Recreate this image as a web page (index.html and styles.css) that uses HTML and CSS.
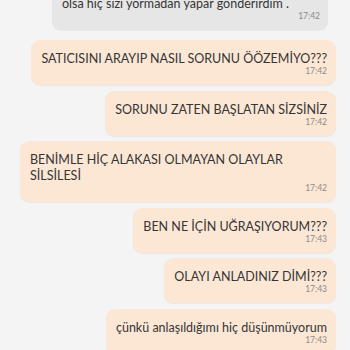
FILE: index.html
```html
<!DOCTYPE html>
<html lang="tr">
<head>
    <meta charset="UTF-8">
    <meta name="viewport" content="width=device-width, initial-scale=1.0">
    <title>Mesajlar</title>
    <link rel="stylesheet" href="styles.css">
</head>
<body>

    <!-- Chat thread (scrolled, first bubble cut off at top) -->
    <div class="chat">
        <div class="msg received first">
            <div class="msg-text">olsa hiç sizi yormadan yapar gönderirdim .</div>
            <div class="msg-time">17:42</div>
        </div>

        <div class="msg sent">
            <div class="msg-text">SATICISINI ARAYIP NASIL SORUNU ÖÖZEMİYO???</div>
            <div class="msg-time">17:42</div>
        </div>

        <div class="msg sent">
            <div class="msg-text">SORUNU ZATEN BAŞLATAN SİZSİNİZ</div>
            <div class="msg-time">17:42</div>
        </div>

        <div class="msg sent">
            <div class="msg-text">BENİMLE HİÇ ALAKASI OLMAYAN OLAYLAR SİLSİLESİ</div>
            <div class="msg-time">17:42</div>
        </div>

        <div class="msg sent">
            <div class="msg-text">BEN NE İÇİN UĞRAŞIYORUM???</div>
            <div class="msg-time">17:43</div>
        </div>

        <div class="msg sent">
            <div class="msg-text">OLAYI ANLADINIZ DİMİ???</div>
            <div class="msg-time">17:43</div>
        </div>

        <div class="msg sent">
            <div class="msg-text">çünkü anlaşıldığımı hiç düşünmüyorum</div>
            <div class="msg-time">17:43</div>
        </div>
    </div>

</body>
</html>
```

FILE: styles.css
```css
body {
    margin: 0;
    background-color: #f4f4f4;
    font-family: Lato, "Open Sans", sans-serif;
    color: #353535;
}

/* Thread */
.chat {
    display: flex;
    flex-direction: column;
    gap: 5.5px;
    padding: 0 14px 0 20px;
}

/* Bubbles */
.msg {
    padding: 11px 9px 8px 10px;
    border-radius: 9px;
    box-shadow: 0 1px 1px rgba(0, 0, 0, 0.05);
}

.msg.sent {
    align-self: flex-end;
    background-color: #fce7d5;
}

.msg.received {
    align-self: stretch;
    margin: 0 8px 0 32px;
    padding-right: 8px;
    background-color: #e6e6e6;
}

.msg.first {
    margin-top: -15px;
    margin-bottom: 4.5px;
}

.msg-text {
    font-size: 12.5px;
    line-height: 16px;
}

.msg-time {
    font-size: 8.5px;
    line-height: 12px;
    margin-top: -2px;
    color: #8a8a8a;
    text-align: right;
}
```
